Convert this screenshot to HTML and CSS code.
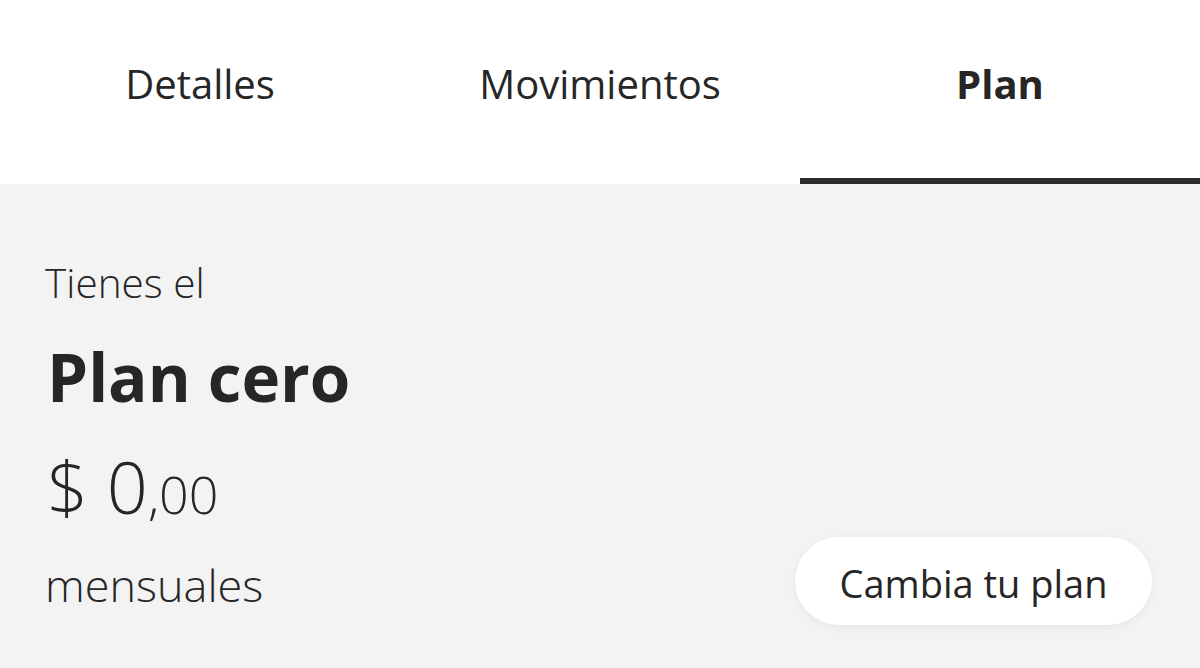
FILE: index.html
```html
<!DOCTYPE html>
<html lang="es">
<head>
    <meta charset="UTF-8">
    <meta name="viewport" content="width=device-width, initial-scale=1.0">
    <title>Plan</title>
    <link rel="stylesheet" href="styles.css">
</head>
<body>
    <!-- Tabs -->
    <nav class="tabs">
        <a class="tab">Detalles</a>
        <a class="tab">Movimientos</a>
        <a class="tab active">Plan</a>
    </nav>

    <!-- Plan info -->
    <section class="plan">
        <p class="plan-intro">Tienes el</p>
        <h2 class="plan-name">Plan cero</h2>
        <p class="plan-price">$ 0<span class="cents">,00</span></p>
        <div class="plan-footer">
            <span class="plan-period">mensuales</span>
            <button class="change-btn">Cambia tu plan</button>
        </div>
    </section>
</body>
</html>
```

FILE: styles.css
```css
body {
    font-family: "Open Sans", "DejaVu Sans", sans-serif;
    margin: 0;
    padding: 0;
    background-color: #f3f3f3;
    color: #262626;
    height: 668px;
    overflow: hidden;
}

.tabs {
    display: grid;
    grid-template-columns: repeat(3, 1fr);
    height: 184px;
    background-color: #fff;
}

.tab {
    display: flex;
    justify-content: center;
    padding-top: 56px;
    font-size: 40px;
    line-height: 56px;
    color: #262626;
    box-sizing: border-box;
    cursor: pointer;
}

.tab.active {
    font-weight: 700;
    border-bottom: 6px solid #2d2d2d;
}

.plan {
    padding: 71px 48px 0 45px;
}

.plan-intro {
    margin: 0;
    font-size: 40.5px;
    font-weight: 300;
    line-height: 56px;
}

.plan-name {
    margin: 26px 0 0 2px;
    font-size: 65.5px;
    font-weight: 700;
    line-height: 80px;
}

.plan-price {
    margin: 29px 0 0 2px;
    font-size: 72px;
    font-weight: 300;
    line-height: 80px;
}

.plan-price .cents {
    font-size: 52px;
}

.plan-footer {
    display: flex;
    justify-content: space-between;
    align-items: center;
    margin-top: 3px;
}

.plan-period {
    padding-top: 6px;
    font-size: 45px;
    font-weight: 300;
}

.change-btn {
    font-family: inherit;
    font-size: 38px;
    color: #262626;
    background-color: #fff;
    border: none;
    border-radius: 44px;
    width: 357px;
    height: 88px;
    padding-top: 4px;
    box-shadow: 0 2px 8px rgba(0, 0, 0, 0.06);
    cursor: pointer;
}
```
